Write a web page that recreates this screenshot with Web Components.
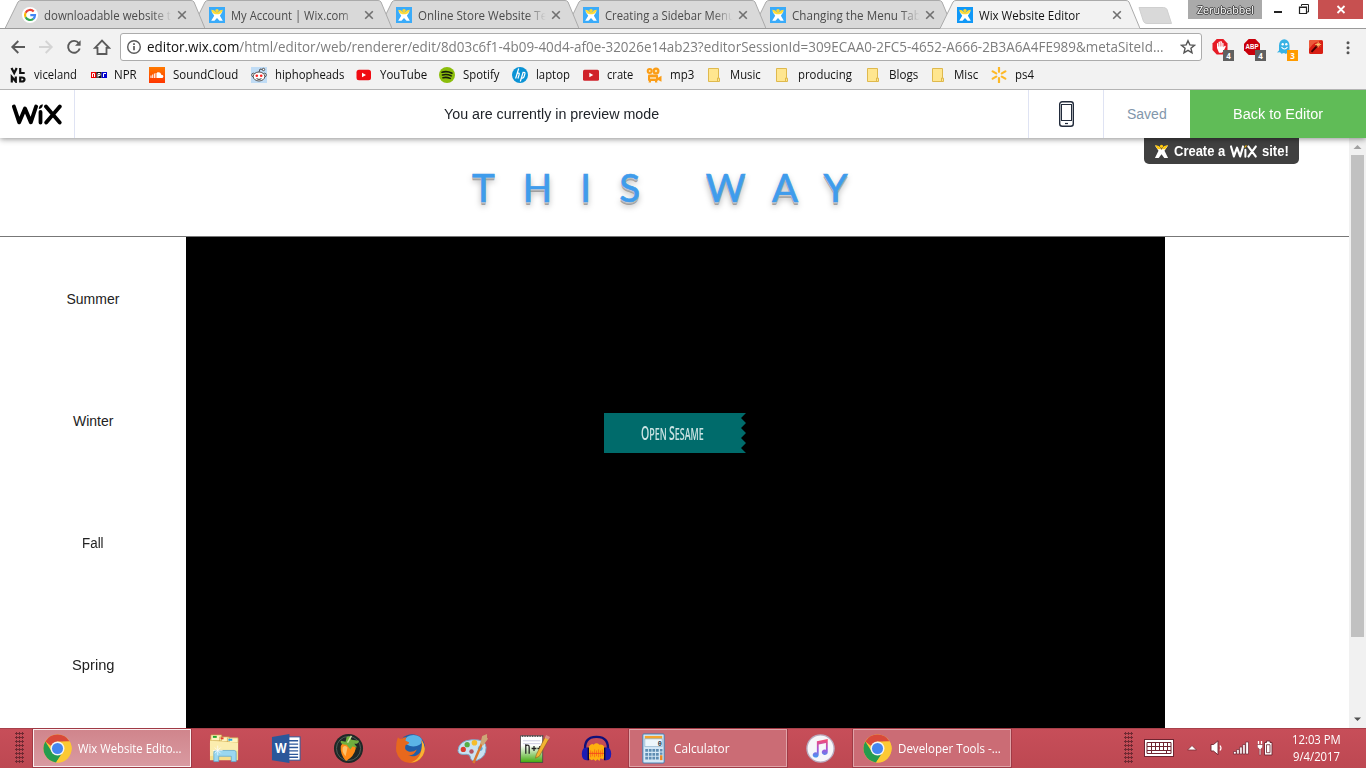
<!DOCTYPE html>
<html lang="en">
<head>
<meta charset="utf-8">
<title>Wix Website Editor</title>
<style>
html,body{margin:0;height:100%;overflow:hidden;background:#fff}
body{font-family:"Open Sans","Noto Sans",sans-serif;font-size:12px;color:#111}
</style>
</head>
<body>
<desktop-screen></desktop-screen>
<script>
const define = (name, html) => customElements.define(name, class extends HTMLElement {
  constructor(){ super(); this.attachShadow({mode:'open'}).innerHTML = typeof html === 'function' ? '' : html; }
  connectedCallback(){ if (typeof html === 'function') this.shadowRoot.innerHTML = html(this); }
});

/* ---------- icon set ---------- */
const wixMan = (bg) => `<rect width="16" height="16" fill="${bg}"/><circle cx="8" cy="3.600" r="1.700" fill="#ffd62e"/><path d="M2.400 4.500L5.300 4.500 8 6.500l2.700-2 2.900 0-2.700 4.200L13.800 13.700h-3.300L8 11 5.500 13.700H2.200L5.200 8.700z" fill="#fff"/><path d="M2 2.800L5 3.300 7 5.200h2l2-1.900 3-.5-1.800 3.400-2.700 1.100h-3L3.800 6.200z" fill="#ffdc3a"/>`;
const chrome = `<circle cx="16" cy="16" r="14.500" fill="#fbc834"/><path d="M3.440 8.750A14.500 14.500 0 0 0 14.500 30.400L21.800 19.400 16 22.500 10 19z" fill="#259b4e"/><path d="M3.440 8.750A14.500 14.500 0 0 1 28.560 8.750H16l-7 4.500z" fill="#d9493a"/><path d="M28.560 8.750A14.500 14.500 0 0 1 14.500 30.400L22 19.200 21.500 9z" fill="#fcc934"/><circle cx="16" cy="16" r="7.200" fill="#f4f4f4"/><circle cx="16" cy="16" r="5.700" fill="#4585ef"/>`;
const ICONS = {
  google:[16,`<circle cx="8" cy="8" r="8" fill="#fff"/><g fill="none" stroke-width="2.200"><path d="M11.700 4.500A5 5 0 0 0 3.600 5.700" stroke="#ea4335"/><path d="M3.600 5.700a5 5 0 0 0 0 4.600" stroke="#fbbc05"/><path d="M3.600 10.300a5 5 0 0 0 7.700 1.500" stroke="#34a853"/><path d="M11.300 11.800A5 5 0 0 0 13 8.200H8.300" stroke="#4285f4"/></g>`],
  wix:[16,wixMan('#3aabf9')], wixOn:[16,wixMan('#1098f7')],
  close:[10,`<path d="M1.200 1.200l7.600 7.600M8.800 1.200L1.200 8.800" stroke="#707070" stroke-width="1.600"/>`],
  back:[16,`<path d="M15 8H3M8.300 2L2.300 8l6 6" fill="none" stroke="#5a5a5a" stroke-width="1.900"/>`],
  fwd:[16,`<path d="M1 8h12M7.700 2l6 6-6 6" fill="none" stroke="#d4d4d4" stroke-width="1.900"/>`],
  reload:[16,`<path d="M12.800 4.300A5.900 5.900 0 1 0 13.700 9.500" fill="none" stroke="#5a5a5a" stroke-width="1.900"/><path d="M14.600 1.200v5.600H9z" fill="#5a5a5a"/>`],
  home:[18,`<path d="M2 9.800L9 2.600l7 7.200h-2.500v6.200H4.500V9.800z" fill="none" stroke="#5a5a5a" stroke-width="1.800"/>`],
  info:[16,`<circle cx="8" cy="8" r="6.300" fill="none" stroke="#5a5a5a" stroke-width="1.400"/><path d="M8 7v4.300M8 4.200v1.700" stroke="#5a5a5a" stroke-width="1.700"/>`],
  star:[16,`<path d="M8 1.700l1.850 4.200 4.600.4-3.500 3 1.050 4.500L8 11.400l-4 2.400 1.050-4.500-3.500-3 4.600-.4z" fill="none" stroke="#555" stroke-width="1.400"/>`],
  dots:[16,`<g fill="#555"><circle cx="8" cy="3.700" r="1.500"/><circle cx="8" cy="8.700" r="1.500"/><circle cx="8" cy="13.700" r="1.500"/></g>`],
  vice:[16,`<g fill="none" stroke="#111" stroke-width="2.200"><path d="M1.500 1L4.200 6l2.500-5M10.200 1v5h4.500M1.800 15.500V10l4 4.500V9.500M10.200 10.500v4h1.500q2.800 0 2.800-2t-2.800-2z"/></g>`],
  npr:[16,`<path fill="#e00" d="M0 5h5.300v6H0z"/><path fill="#111" d="M5.300 5h5.300v6H5.300z"/><path fill="#0000d0" d="M10.600 5H16v6h-5.400z"/><path d="M1.500 10V6.500h2V10M7 10.500V6.500h2v2H7M12.500 10V6.500h2.500" fill="none" stroke="#fff" stroke-width="1"/>`],
  sound:[16,`<defs><linearGradient id="g" x2="0" y2="1"><stop stop-color="#ff7a00"/><stop offset="1" stop-color="#ff3500"/></linearGradient></defs><path fill="url(#g)" d="M0 0h16v16H0z"/><path d="M2 8.500v2.500M3.700 7.500V11M5.400 6.500V11M7.100 6V11" stroke="#fff"/><path d="M8 5.500c3-1 4 1 4.200 2.200C15 7.500 15 11 12.700 11H8z" fill="#fff"/>`],
  reddit:[16,`<path fill="#c0dcf5" d="M0 0h16v16H0z"/><g fill="#fff" stroke="#444" stroke-width=".9"><circle cx="2.500" cy="8" r="1.800"/><circle cx="13.500" cy="8" r="1.800"/><ellipse cx="8" cy="9.500" rx="5.800" ry="4.500"/><path d="M8 5l1-3 3 .6" fill="none"/><circle cx="12.500" cy="2.500" r="1.200"/></g><circle cx="5.800" cy="8.700" r="1.300" fill="#f22"/><circle cx="10.200" cy="8.700" r="1.300" fill="#f22"/><path d="M5.500 11.700q2.500 1.500 5 0" stroke="#333" fill="none"/>`],
  yt:[16,`<rect x=".5" y="2.700" width="14.500" height="10.600" rx="2.500" fill="#f00b12"/><path d="M6 5.700v4.600L10 8z" fill="#fff"/>`],
  yt2:[16,`<rect y="2.700" width="16" height="11" rx="1.500" fill="#d0222a"/><path d="M6.300 5.700v4.600L10.300 8z" fill="#fff"/>`],
  spotify:[16,`<circle cx="8" cy="8" r="8" fill="#8bbe0b"/><path d="M3 5.300q5-1.600 10 .9M3.500 8q4.500-1.200 8.700.9M4 10.700q3.600-1 7.200.7" fill="none" stroke="#17200a" stroke-width="1.600" stroke-linecap="round"/>`],
  hp:[16,`<circle cx="8" cy="8" r="8" fill="#0a93d5"/><path d="M6.700 1.500L3.600 11.500M5 6.500q2.800-1.200 2.200.8L5.900 11.500M11.200 5L8.300 14.500M10.700 5.500q2.800-.6 2.200 1.300l-.9 3q-.5 1.500-2.300 1.200" fill="none" stroke="#fff" stroke-width="1.200"/>`],
  cam:[16,`<g fill="#fb9d16"><circle cx="3.700" cy="4" r="3"/><circle cx="10" cy="4" r="3.500"/><rect x="2" y="7.500" width="10" height="6.500" rx="1"/><path d="M11.500 11l4-2.200v6l-4-2zM3 14h2v1.500H2.500zM9 14h2l.5 1.500H9z"/></g><g fill="#ffe3ac"><circle cx="3.700" cy="4" r="1"/><circle cx="10" cy="4" r="1.200"/></g><path d="M4 11h6" stroke="#fff0cc" stroke-width="1.300"/>`],
  folder:[16,`<path d="M1.500 1.500h10v9.700h1v3.300h-11z" fill="#ffe68f" stroke="#dfb94d"/><path d="M10.500 14v-3h1.500" fill="none" stroke="#dfb94d"/>`],
  walmart:[16,`<path d="M8 .8v4M8 11.200v4M1.700 4.400l3.500 2M10.800 9.600l3.500 2M14.300 4.400l-3.500 2M5.200 9.600l-3.500 2" stroke="#fdb927" stroke-width="2.200" stroke-linecap="round"/>`],
  hand:[16,`<path d="M4.700 0h6.600L15.500 4.500v6.500L11.300 15.500H4.700L.5 11V4.500z" fill="#e61b25"/><path d="M5 9V4.500q.8-1 1.500 0V3q.9-1.200 1.700 0v-.5q.9-.9 1.700.3V4q1-.8 1.600.2v4l1.200-1.400q1.300-.3 1 1L11.500 12 10 13.700H7z" fill="#fff"/><path d="M6.600 4v3.500M8.300 3v4.500M10 4v3.500" stroke="#e61b25" stroke-width=".5"/>`],
  abp:[16,`<path d="M4.700 0h6.600L16 4.700v6.600L11.300 16H4.700L0 11.300V4.700z" fill="#c9000b"/><text x="8" y="9.800" text-anchor="middle" font-family="Liberation Sans" font-weight="700" font-size="7.500" textLength="13" lengthAdjust="spacingAndGlyphs" fill="#fff">ABP</text>`],
  ghost:[16,`<path d="M3 6.500a5 6 0 0 1 10.500 0V12l1 2-3-.5-1.500 1.500-2-1-2.500.8-1.500-1.500-3 .3 2-2z" fill="#38b2e4"/><circle cx="6.700" cy="5.200" r="1.200" fill="#fff"/><circle cx="10.300" cy="5.200" r="1.200" fill="#fff"/><path d="M5.500 8q3 4 6 0" stroke="#fff" fill="none" stroke-width="1.100"/>`],
  wand:[16,`<rect x="1" y="1" width="14" height="14" rx="1.500" fill="#d91f14"/><path d="M1 10V2.500Q1 1 2.500 1H15q-9 1-14 9" fill="#ed5a3a"/><path d="M3.500 12.800L9 7" stroke="#400" stroke-width="1.900"/><path d="M10.200 2.500v6M7.200 5.500h6M8.500 3.800l3.500 3.500M12 3.800L8.500 7.300" stroke="#ffd876" stroke-width=".8"/>`],
  phone:[28,`<rect x="6.700" y="1.700" width="13.600" height="24.600" rx="2.500" fill="#fff" stroke="#222b3b" stroke-width="1.400"/><rect x="8.500" y="4.500" width="10" height="16" fill="none" stroke="#222b3b"/><path d="M12 23.500h3" stroke="#222b3b" stroke-width="1.200"/>`],
  man:[16,`<path d="M1 1.500l4 .8L8 6l3-3.700 4-.8-3.800 5.700L15 15h-4l-3-4-3 4H1l3.800-7.800z" fill="#fff"/><path d="M1 1l4 1 2 3h2l2-3 4-1-3 4.500H4z" fill="#ffc80a"/><circle cx="8" cy="2.500" r="1.800" fill="#ffc80a"/>`],
  chrome:[32,chrome],
  explorer:[32,`<path d="M1 6h29v21H1z" fill="#e6c15d"/><path d="M2 2h11v6H2zM11 4h10v5H11zM19 5h11v5H19z" fill="#fff3be" stroke="#c9a449" stroke-width=".7"/><path d="M4 3h4v2H4z" fill="#22a62c"/><path d="M12 4.500h3v2h-3z" fill="#e3412b"/><path d="M20 6h4v2h-4z" fill="#20a9e8"/><path d="M1 8l29 2v18H1z" fill="#f6df8b"/><path d="M1 8l29 2v8L1 24z" fill="#fcf0b6" opacity=".8"/><path d="M5 29.500V20q0-2 2-2h19q2 0 2 2v9.500h-5V24H10v5.500z" fill="#9ad7f0" stroke="#62a8cd" stroke-width=".8"/><path d="M9 13v10M4 18h10M6 15l6 6M12 15l-6 6" stroke="#fff" stroke-width=".7"/>`],
  word:[32,`<rect x="16" y="4" width="14" height="24" fill="#fff" stroke="#2b579a"/><path d="M18 8h10M18 11.500h10M18 15h10M18 18.500h10M18 22h10M18 25h10" stroke="#2b579a" stroke-width="1.400"/><path d="M1 4l18-3v30L1 28z" fill="#2b579a"/><text x="10" y="21" text-anchor="middle" font-family="Open Sans" font-weight="700" font-size="14" textLength="12" lengthAdjust="spacingAndGlyphs" fill="#fff">W</text>`],
  fl:[32,`<circle cx="16" cy="16" r="15" fill="#202826"/><circle cx="16" cy="16" r="12.500" fill="none" stroke="#4f5c58"/><path d="M8 14q1-5 8-2 8-1 7.500 4Q22 24 13.500 29 7 22 8 14z" fill="#ff8b16"/><path d="M10 15q2-3 5 0l-2 9q-4-4-3-9z" fill="#ffc269"/><path d="M14 12q-7 0-6-4l5 1 1-5 3-1 2 4 8 1q-1 4-5 3l3 4-5-1-2 3z" fill="#70ae3e"/><path d="M15 10l4-7" stroke="#cde3a0" stroke-width="1.500"/>`],
  firefox:[32,`<circle cx="17.500" cy="14.500" r="13.300" fill="#1f5fa8"/><ellipse cx="19" cy="8" rx="9" ry="6" fill="#5bb4e6"/><path d="M3 4.500q1.500 2 4 1.500Q9 4 12 4.500q-1.500 2-1 3.500l3.500 1.500q0 2-3.500 3Q9 18 14 19q4.500 1 8.500-2-3 7-9 6 7 3 12.500-3Q29 15 27 7q6 9 2 16Q24 31.500 15.500 31 4 30 1.300 19 .5 11 3 4.500z" fill="#e7681d"/><path d="M27.500 7q6 9 1 16.500-5 7-12 7 8-3 10-10 2-6 1-13.500z" fill="#f9b233"/>`],
  paint:[32,`<path d="M1 18Q2 8 15 7q15-1 15 8 0 10-9 13-6 2-7-2 0-4-4-4Q1 23 1 18z" fill="#c9e2f2" stroke="#7da9c8"/><circle cx="6.500" cy="17" r="2.700" fill="#d93c2f"/><circle cx="10.500" cy="12" r="2.700" fill="#55ae43"/><circle cx="18" cy="10" r="2.900" fill="#f6bd2b"/><circle cx="24" cy="16" r="2.500" fill="#59aae0"/><circle cx="15" cy="19" r="2.300" fill="#b4525f"/><path d="M17 31l9-21" stroke="#d9792d" stroke-width="2.500"/><path d="M24 11l2-8 5-2v4l1 1-5 7z" fill="#cda777"/>`],
  npp:[32,`<defs><linearGradient id="n" x2="0" y2="1"><stop offset=".35" stop-color="#fff"/><stop offset="1" stop-color="#3fa90b"/></linearGradient></defs><rect x="1.500" y="3" width="23" height="27.500" fill="url(#n)" stroke="#444" stroke-width=".8"/><path d="M3 3h22" stroke="#555" stroke-width="2" stroke-dasharray="1.300 1.300"/><path d="M4 8h18M4 11h18" stroke="#aac" stroke-width=".6"/><path d="M7 21.500V11.500M7 13q3.500-1.500 3.500 1.500v7M13 16h5M15.500 13.500v5M19 16h5M21.500 13.500v5" fill="none" stroke="#222" stroke-width="1.300"/><path d="M17 26l1-4L27 4l4 2-10 18z" fill="#f3b531" stroke="#855c1d" stroke-width=".6"/><path d="M26.500 5l1.500-3 4 2-1.500 3z" fill="#d98b87"/>`],
  audacity:[32,`<path d="M4.500 20Q2 4 16 4t11.500 16" fill="none" stroke="#10107a" stroke-width="2.500"/><path d="M8 14q3-4 5-2 3-3 6 0 3-1 5 2 2 7-1 13l-3-1-1 3-2-2-2 2-2-2-2 1-3-2Q6 22 8 14z" fill="#ffb010"/><path d="M8 21h16" stroke="#f5471c"/><path d="M10 18v7M12 19v5M14 17v8M16 18v6M18 17v8M20 18v7M22 17v7" stroke="#f5471c" stroke-width=".6"/><path d="M7 15Q1 14 .8 21.500 1 29 7 28zM25 15q6-1 6.200 6.500Q31 29 25 28z" fill="#1c1cb4"/><path d="M7.500 15v13M24.500 15v13" stroke="#070745" stroke-width="1.500"/>`],
  calc:[32,`<rect x="5" y="1" width="22" height="30" rx="1" fill="#d5e8f6" stroke="#3e7fb4"/><path d="M7 3h18v3H7z" fill="#f3a52f"/><path d="M7 6h18v8H7z" fill="#eef7fc" stroke="#7ba3c0" stroke-width=".6"/><text x="22.500" y="13" text-anchor="middle" font-family="Liberation Mono" font-weight="700" font-size="7" fill="#234">0</text><path d="M7.500 18h14M7.500 22h14M7.500 26h14" stroke="#5f8db3" stroke-width="2.800" stroke-dasharray="2.800 .9"/><path d="M24 16.500v6" stroke="#5f8db3" stroke-width="2.500" stroke-dasharray="2.600 1"/><path d="M24 23v5" stroke="#eb8a24" stroke-width="2.500"/>`],
  itunes:[32,`<defs><linearGradient id="i" x2="0" y2="1"><stop stop-color="#fb4b6b"/><stop offset=".55" stop-color="#a553d9"/><stop offset="1" stop-color="#3f9df4"/></linearGradient></defs><circle cx="16" cy="16" r="15" fill="#f6f6fa" stroke="#b8abbf" stroke-width="1.500"/><path d="M12 8l12-2.500V20a3.300 3 0 1 1-2-2.700V10l-8 1.700V23a3.300 3 0 1 1-2-2.700z" fill="url(#i)"/>`],
  keyboard:[32,`<rect x="1.500" y="7.500" width="29" height="17" fill="#fff" stroke="#6f2430"/><path d="M4 10.500h24v11H4zM4 14.500h24M4 18.500h24M8.500 10.500v8M12.500 10.500v8M16.500 10.500v8M20.500 10.500v8M24.500 10.500v8M8.500 18.500v3M23.500 18.500v3" stroke="#6f2430" fill="none"/>`],
  up:[16,`<path d="M3.500 10L8 5.500l4.500 4.500z" fill="#fff" stroke="#7b2c36" stroke-width=".8"/>`],
  speaker:[16,`<path d="M2 4.500h2.500L9 .8v14L4.500 11H2z" fill="#fff" stroke="#6f2430" stroke-width=".9"/><path d="M11 5.500q2 2.500 0 5" fill="none" stroke="#fff" stroke-width="1.200"/>`],
  signal:[16,`<g fill="#fff" stroke="#6f2430" stroke-width=".7"><path d="M.5 11.500h2.700V14H.5zM3.700 9.500h2.500V14H3.700zM6.700 7h2.500v7H6.700zM9.700 4.500h2.500V14H9.700zM12.700 2h2.800v12h-2.800z"/></g>`],
  battery:[16,`<path d="M7.500 2.500h2V1h3.500v1.500h2v12.500H7.500z" fill="#fff" stroke="#6f2430" stroke-width=".9"/><path d="M9.500 4.700h3.500v8H9.500z" fill="#fff" stroke="#6f2430" stroke-width=".8"/><path d="M1.500 1v3M4.500 1v3" stroke="#fff" stroke-width="1.300"/><path d="M.3 4.500h5.400v2.700L3.800 9V15H2.300V9L.3 7.200z" fill="#fff" stroke="#6f2430" stroke-width=".5"/>`],
  sbUp:[17,`<path d="M4.500 11L8.500 7l4 4z" fill="#a0a0a0"/>`],
  sbDown:[17,`<path d="M5 6.500h7L8.500 10z" fill="#505050"/>`]
};
define('ui-icon', el => { const [box, art] = ICONS[el.getAttribute('name')], s = el.getAttribute('size') || box;
  return `<style>:host{display:block;flex:none;width:${s}px;height:${s}px}svg{display:block}</style><svg width="${s}" height="${s}" viewBox="0 0 ${box} ${box}">${art}</svg>`; });

define('wix-logo', el => { const c = el.hasAttribute('dark') ? '#fff' : '#000', w = el.getAttribute('w'), h = el.getAttribute('h'), d = el.hasAttribute('dark') ? '#f4b400' : c;
  return `<style>:host{display:block;flex:none}svg{display:block}</style><svg width="${w}" height="${h}" viewBox="0 0 50 21" preserveAspectRatio="none"><g fill="none" stroke="${c}" stroke-linejoin="round" stroke-linecap="round"><path d="M1.900 2.500L7.200 18.300 13 4.500 18.800 18.300 24.100 2.500" stroke-width="3.900"/><path d="M28.500 8V18.500M34 2.500L47.700 18.500M47.800 2.500L34.200 18.500" stroke-width="3.800"/></g><path d="M26.800 4.200q.5-3.500 4-4 .2 4-4 4.800z" fill="${d}"/></svg>`; });

/* ---------- browser chrome ---------- */
define('browser-tab', el => { const on = el.hasAttribute('active');
  return `<style>:host{display:flex;align-items:center;position:relative;box-sizing:border-box;width:200px;height:29px;flex:none;margin-right:-13px;padding:1px 0 0 17px;color:${on?'#111':'#4b4b4b'}}
  svg{position:absolute;left:0;top:0;z-index:-1}
  .t{width:129px;overflow:hidden;margin:0 4px 0 6px;${on?'':'-webkit-mask-image:linear-gradient(90deg,#000 84%,transparent 99%)'}}
  :host{isolation:isolate}</style>
  <svg width="200" height="29"><path d="M0 28.500L13 2Q14 .5 16 .5H186Q188 .5 189 2L200 28.500" fill="${on?'#f2f2f2':'#d9d9d9'}" stroke="#aaa"/>${on?'':'<path d="M0 28.500h200" stroke="#9a9a9a"/>'}</svg>
  <ui-icon name="${el.getAttribute('icon')}"></ui-icon><div class="t"><ui-text w="${el.getAttribute('w')}">${el.getAttribute('label')}</ui-text></div><ui-icon name="close" size="10"></ui-icon>`; });

define('tab-strip', `<style>:host{display:flex;height:29px;background:linear-gradient(#9a9a9a,#9a9a9a) 0 28px/100% 1px no-repeat #fff;padding-left:5px}
 .new{width:34px;height:17px;margin:7px 0 0 11px;flex:none}.win{margin-left:auto;display:flex;align-items:flex-start}
 .user{width:74px;height:19px;background:#aaa;display:flex;justify-content:center;align-items:center;color:#fff;text-shadow:1px 0 #444,-1px 0 #444,0 1px #444,0 -1px #444;font-size:11px;line-height:18px}
 .win svg{display:block}</style>
 <browser-tab icon="google" label="downloadable website t" w="127" style="z-index:6"></browser-tab>
 <browser-tab icon="wix" label="My Account | Wix.com" w="118" style="z-index:5"></browser-tab>
 <browser-tab icon="wix" label="Online Store Website Te" w="129" style="z-index:4"></browser-tab>
 <browser-tab icon="wix" label="Creating a Sidebar Menu" w="130" style="z-index:3"></browser-tab>
 <browser-tab icon="wix" label="Changing the Menu Tab" w="129" style="z-index:2"></browser-tab>
 <browser-tab icon="wixOn" label="Wix Website Editor" w="101" active style="z-index:7"></browser-tab>
 <svg class="new" viewBox="0 0 34 17"><path d="M1 .5H25.500Q28 .5 29 2.500L33.500 16.500H9Q6.500 16.500 5.500 14.500z" fill="#d9d9d9" stroke="#cfcfcf"/></svg>
 <div class="win"><div class="user"><ui-text w="57">Zerubabbel</ui-text></div>
 <svg width="56" height="19"><path d="M12 12h8" stroke="#222" stroke-width="2"/><path d="M39.500 6v-1.500h7v7.500h-1.500" fill="none" stroke="#222"/><path d="M37.500 7h7v6.500h-7zM37 7.500h8" fill="none" stroke="#222" stroke-width="1.200"/></svg>
 <svg width="45" height="19"><path fill="#c75050" d="M0 0h45v19H0z"/><path d="M19.500 6l7 7M26.500 6l-7 7" stroke="#fff" stroke-width="1.800"/></svg><svg width="3" height="1"></svg></div>`);

define('ext-icon', el => `<style>:host{display:block;position:relative;width:16px;height:16px;flex:none}b{position:absolute;left:11px;top:11px;width:11px;height:11px;font:700 8px/11px "Open Sans",sans-serif;color:#fff;text-align:center;background:${el.getAttribute('bg')}}</style><ui-icon name="${el.getAttribute('name')}"></ui-icon>${el.hasAttribute('n')?`<b>${el.getAttribute('n')}</b>`:''}`);

define('address-bar', `<style>:host{display:flex;align-items:center;height:36px;background:#f2f2f2;padding-left:10px}
 .nav{display:flex;align-items:center;gap:12px;width:110px;flex:none}.nav ui-icon:last-child{margin-left:-1px}
 .box{display:flex;align-items:center;width:1070px;height:26px;border:1px solid #acacac;border-radius:3px;background:#fff;padding:0 5px}
 .url{margin:-1px 0 1px 5px;flex:1;font-size:14px;color:#7d7d7d}.url span{color:#111}
 .ext{display:flex;gap:16px;margin:-1px 0 0 10px}</style>
 <div class="nav"><ui-icon name="back"></ui-icon><ui-icon name="fwd"></ui-icon><ui-icon name="reload"></ui-icon><ui-icon name="home"></ui-icon></div>
 <div class="box"><ui-icon name="info"></ui-icon><div class="url"><ui-text w="1017"><span>editor.wix.com</span>/html/editor/web/renderer/edit/8d03c6f1-4b09-40d4-af0e-32026e14ab23?editorSessionId=309ECAA0-2FC5-4652-A666-2B3A6A4FE989&amp;metaSiteId...</ui-text></div><ui-icon name="star"></ui-icon></div>
 <div class="ext"><ext-icon name="hand" n="4" bg="#606060"></ext-icon><ext-icon name="abp" n="4" bg="#606060"></ext-icon><ext-icon name="ghost" n="3" bg="#ff9b00"></ext-icon><ext-icon name="wand"></ext-icon><ui-icon name="dots"></ui-icon></div>`);

const MARKS = [['vice','viceland',43,24,81],['npr','NPR',23,23,58],['sound','SoundCloud',65,24,102],['reddit','hiphopheads',69,24,105],['yt','YouTube',47,24,83],['spotify','Spotify',37,24,73],['hp','laptop',34,24,71],['yt2','crate',26,24,63],['cam','mp3',24,24,61],['folder','Music',31,23,68],['folder','producing',54,23,91],['folder','Blogs',29,23,65],['folder','Misc',24,23,60],['walmart','ps4',19,24,60]];
define('bookmark-bar', `<style>:host{display:flex;align-items:center;height:25px;box-sizing:border-box;background:#f2f2f2;border-bottom:1px solid #b4b4b4;padding:0 0 4px 10px}.m{display:flex;align-items:center;flex:none}ui-text{margin-bottom:2px}</style>`
 + MARKS.map(([i,t,w,o,p])=>`<div class="m" style="width:${p}px;gap:${o-16}px"><ui-icon name="${i}"></ui-icon><ui-text w="${w}">${t}</ui-text></div>`).join(''));

/* ---------- preview page ---------- */
define('preview-bar', `<style>:host{display:flex;height:48px;background:#fff;position:relative;z-index:2;box-shadow:0 1px 6px rgba(0,0,0,.45);clip-path:inset(0 0 -12px 0);font:14px "Liberation Sans",sans-serif;color:#20242a}
 div{display:flex;align-items:center;justify-content:center;box-sizing:border-box;border-right:1px solid #dfe3f3}
 .logo{width:75px}.msg{width:954px}.ph{width:75px;padding-left:1px}.sv{width:86px;border:0;color:#8296ab}.go{width:176px;border:0;background:#60bc57;color:#fff}</style>
 <div class="logo"><wix-logo w="50" h="21"></wix-logo></div><div class="msg"><ui-text w="215">You are currently in preview mode</ui-text></div>
 <div class="ph"><ui-icon name="phone"></ui-icon></div><div class="sv"><ui-text w="40">Saved</ui-text></div><div class="go"><ui-text w="90">Back to Editor</ui-text></div>`);

define('site-preview', `<style>:host{display:grid;grid-template-columns:1349px 17px;height:590px;background:#fff;position:relative}
 .page{display:grid;grid-template-rows:98px 492px;min-height:0}
 header{display:flex;justify-content:flex-start;padding:25px 0 0 472px;box-sizing:border-box}
 h1{margin:0;font:400 38.500px/48px Lato,sans-serif;-webkit-text-stroke:.7px #3f9cec;color:#3f9cec;text-shadow:0 1px 0 #d0d0d0,0 2px 0 #b2b2b2,0 3px 0 #a0a0a0,0 4px 6px rgba(0,0,0,.35);letter-spacing:28.100px;white-space:pre}
 main{display:grid;grid-template-columns:186px 979px 1fr;border-top:1px solid #777;min-height:0}
 nav{display:flex;flex-direction:column;font:14px/20px "Liberation Sans",sans-serif;color:#222;padding-top:52px;gap:102px;align-items:center}
 .stage{background:#000;display:flex;align-items:flex-start;padding:176px 0 0 418px;box-sizing:border-box}
 .btn{width:142px;height:40px;background:#006b6b;clip-path:polygon(0 0,100% 0,137px 5px,100% 10px,137px 15px,100% 20px,137px 25px,100% 30px,137px 35px,100% 40px,0 40px);display:flex;align-items:center;padding-left:37px;box-sizing:border-box;font:600 17px/40px "Open Sans",sans-serif;color:#c9e2e2}.btn big{font-size:20px}
 .sb{background:#f1f1f1;display:flex;flex-direction:column;align-items:center}.thumb{width:13px;height:482px;background:#c1c1c1;margin-bottom:auto}
 .ad{position:absolute;left:1144px;top:0;width:155px;height:26px;border-radius:0 0 5px 5px;background:#404040;display:flex;align-items:center;padding-left:10px;box-sizing:border-box;gap:5px;font:700 14px "Liberation Sans",sans-serif;color:#fff}</style>
 <div class="page"><header><h1>THIS WAY</h1></header><main><nav><ui-text w="53">Summer</ui-text><ui-text w="40">Winter</ui-text><ui-text w="22">Fall</ui-text><ui-text w="42">Spring</ui-text></nav>
 <div class="stage"><div class="btn"><ui-text w="63"><big>O</big>PEN <big>S</big>ESAME</ui-text></div></div></main></div>
 <div class="sb"><ui-icon name="sbUp"></ui-icon><div class="thumb"></div><ui-icon name="sbDown"></ui-icon></div>
 <div class="ad"><ui-icon name="man" size="15"></ui-icon><ui-text w="51">Create a</ui-text><wix-logo dark w="27" h="13"></wix-logo><ui-text w="27">site!</ui-text></div>`);

/* ---------- taskbar ---------- */
define('task-button', el => `<style>:host{display:flex;align-items:center;box-sizing:border-box;width:158px;height:38px;flex:none;padding-left:8px;gap:5px;color:#fff;border:1px solid ${el.hasAttribute('active')?'#fbeef0':'#e0a3a8'};background:${el.hasAttribute('active')?'linear-gradient(#d0858c,#d99aa1)':'#cb6c75'};outline:1px solid #a03a45;outline-offset:0}</style><ui-icon name="${el.getAttribute('icon')}" size="31"></ui-icon><ui-text w="${el.getAttribute('w')}">${el.getAttribute('label')}</ui-text>`);
define('task-bar', `<style>:host{display:flex;align-items:center;height:40px;box-sizing:border-box;border-top:1px solid #a8404a;background:linear-gradient(#c74e59,#bd4852);color:#fff;padding:0 0 1px 15px}
 .grip{width:9px;height:32px;background:radial-gradient(circle at 1.500px 1.500px,#6f2932 1px,transparent 1.200px) 0 0/3px 4px;flex:none}
 .s{width:62px;display:flex;justify-content:center;flex:none}.clock{display:flex;flex-direction:column;align-items:center;line-height:17px;margin-left:19px}</style>
 <div class="grip"></div><task-button active icon="chrome" label="Wix Website Edito..." w="104" style="margin:0 2px 0 9px"></task-button>
 ${['explorer','word','fl','firefox','paint','npp','audacity'].map(n=>`<div class="s"><ui-icon name="${n}" size="31"></ui-icon></div>`).join('')}
 <task-button icon="calc" label="Calculator" w="55" style="margin:0 2px"></task-button><div class="s"><ui-icon name="itunes" size="29"></ui-icon></div>
 <task-button icon="chrome" label="Developer Tools -..." w="103" style="margin:0 113px 0 2px"></task-button>
 <div class="grip"></div><ui-icon name="keyboard" style="margin-left:10px"></ui-icon><ui-icon name="up" style="margin:0 9px 0 9px"></ui-icon><ui-icon name="speaker"></ui-icon><ui-icon name="signal" style="margin:0 8px 0 8px"></ui-icon><ui-icon name="battery"></ui-icon>
 <div class="clock"><ui-text w="49">12:03 PM</ui-text><ui-text w="47">9/4/2017</ui-text></div>`);

define('desktop-screen', `<style>:host{display:flex;flex-direction:column;width:1366px;height:768px;overflow:hidden}</style><tab-strip></tab-strip><address-bar></address-bar><bookmark-bar></bookmark-bar><preview-bar></preview-bar><site-preview></site-preview><task-bar></task-bar>`);

/* A single-line label stretched or condensed to the width given in "w". */
customElements.define('ui-text', class extends HTMLElement {
  constructor(){ super(); this.attachShadow({mode:'open'}).innerHTML = `<style>:host{display:block;flex:none;white-space:nowrap}span{display:inline-block;transform-origin:0 50%}</style><span><slot></slot></span>`; }
  connectedCallback(){ const s = this.shadowRoot.querySelector('span'), w = +this.getAttribute('w'); this.style.width = w + 'px'; s.style.transform = `scaleX(${w / s.offsetWidth})`; }
});
</script>
</body>
</html>
